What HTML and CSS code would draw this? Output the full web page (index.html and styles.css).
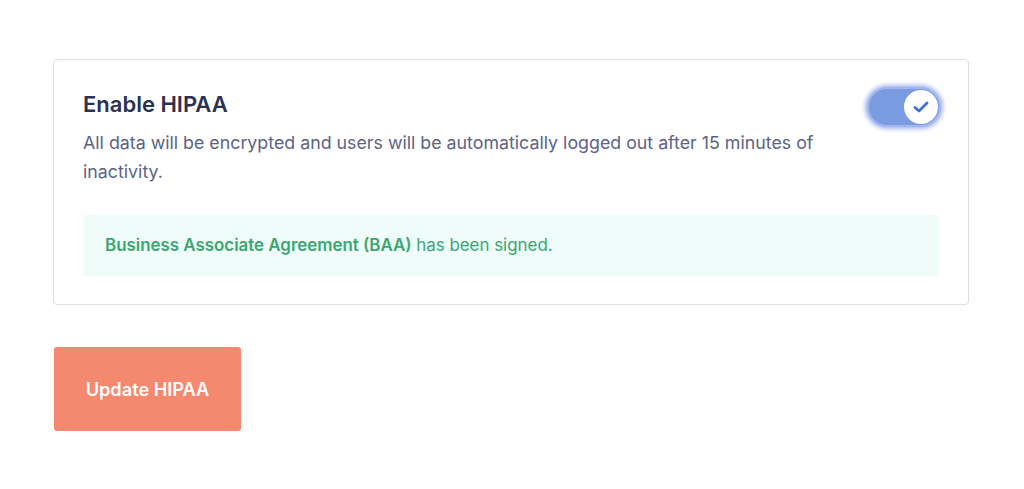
FILE: index.html
```html
<!DOCTYPE html>
<html>
<head>
<meta charset="utf-8">
<link rel="stylesheet" href="styles.css">
</head>
<body>
<div class="page">
  <section class="card">
    <div class="card-head">
      <div class="card-text">
        <h2 class="title">Enable HIPAA</h2>
        <p class="desc">All data will be encrypted and users will be automatically logged out after 15 minutes of inactivity.</p>
      </div>
      <div class="toggle">
        <span class="knob">
          <svg width="18" height="14" viewBox="0 0 18 14"><path d="M3 7.5 L7 11 L15 3" fill="none" stroke="#3f6fd8" stroke-width="2.8" stroke-linecap="round" stroke-linejoin="round"/></svg>
        </span>
      </div>
    </div>
    <div class="notice"><strong>Business Associate Agreement (BAA)</strong> has been signed.</div>
  </section>
  <button class="btn">Update HIPAA</button>
</div>
</body>
</html>
```
FILE: styles.css
```css
* { box-sizing: border-box; }
html, body { margin: 0; background: #fff; }
body { font-family: Inter, "Noto Sans", sans-serif; }
.page {
  padding: 59px 55px 0 53px;
  display: flex;
  flex-direction: column;
  align-items: flex-start;
}
.card {
  width: 916px;
  border: 1px solid #dcdfea;
  border-radius: 4px;
  padding: 29px 29px 28px 29px;
}
.card-head {
  display: flex;
  justify-content: space-between;
  align-items: flex-start;
}
.card-text { width: 790px; }
.title {
  margin: 0;
  font-size: 22px;
  font-weight: 600;
  color: #2b3150;
  line-height: 30px;
}
.desc {
  margin: 9px 0 0;
  font-size: 17.8px;
  line-height: 29px;
  color: #5d6383;
}
.toggle {
  margin-top: -2px;
  margin-right: -2px;
  width: 74px;
  height: 40px;
  border-radius: 20px;
  background: #7b9be0;
  border: 2px solid #a3b7ee;
  box-shadow: 0 0 4px 2px rgba(90, 120, 230, 0.55);
  display: flex;
  align-items: center;
  justify-content: flex-end;
  padding-right: 1px;
}
.knob {
  width: 34px;
  height: 34px;
  border-radius: 50%;
  background: #fff;
  display: flex;
  align-items: center;
  justify-content: center;
}
.notice {
  margin-top: 29px;
  background: #effcf9;
  border-radius: 2px;
  padding: 18px 22px;
  font-size: 16.9px;
  line-height: 25px;
  color: #3ca673;
}
.notice strong { font-weight: 600; }
.btn {
  margin-top: 42px;
  margin-left: 1px;
  width: 187px;
  height: 84px;
  border: 0;
  border-radius: 3px;
  background: #f5896f;
  color: #fff;
  font-family: Inter, "Noto Sans", sans-serif;
  font-size: 18.2px;
  font-weight: 600;
}
```
